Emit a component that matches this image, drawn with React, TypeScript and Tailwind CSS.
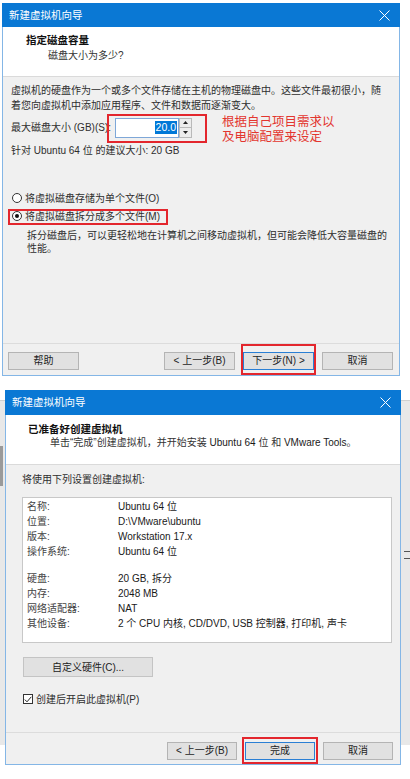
import React from "react";

const F = "[font-family:'Liberation_Sans','Noto_Sans_CJK_SC',sans-serif]";

function CloseX() {
  return (
    <svg width="11" height="11" viewBox="0 0 11 11" className="shrink-0">
      <path d="M0.5 0.5 L10.5 10.5 M10.5 0.5 L0.5 10.5" stroke="#ffffff" strokeWidth="1" fill="none" />
    </svg>
  );
}

function TitleBar({ h }: { h: string }) {
  return (
    <div className={`${h} bg-[#0a78d4] flex items-center justify-between pl-[7px] pr-[10px]`}>
      <span className="text-[10.5px] text-white [font-family:'Noto_Sans_CJK_SC',sans-serif] leading-none">新建虚拟机向导</span>
      <CloseX />
    </div>
  );
}

function Btn({ children, w, primary }: { children: React.ReactNode; w: string; primary?: boolean }) {
  return (
    <div
      className={`${w} h-[18px] flex items-center justify-center bg-[#e1e1e1] border ${
        primary ? "border-[#2a7fd4]" : "border-[#b4b4b4]"
      } text-[10px] text-[#1e1e1e] leading-none`}
    >
      {children}
    </div>
  );
}

function RedBox({ className }: { className: string }) {
  return <div className={`absolute border-2 border-[#e3262d] pointer-events-none ${className}`} />;
}

function Radio({ checked }: { checked?: boolean }) {
  return (
    <div className="w-[10px] h-[10px] rounded-full border border-[#333] bg-white flex items-center justify-center shrink-0">
      {checked && <div className="w-[4px] h-[4px] rounded-full bg-[#111]" />}
    </div>
  );
}

function Dialog1() {
  return (
    <div className="ml-[2px] mt-[3px] w-[398px]">
      <TitleBar h="h-[24px]" />
      <div className="border-x border-b border-[#84b6e6] bg-[#f0f0f0]">
        <div className="h-[50px] bg-white border-b border-[#dadada] pt-[6px]">
          <div className="pl-[23px] text-[10.5px] font-bold text-[#111] leading-[14px]">指定磁盘容量</div>
          <div className="pl-[45px] mt-[2px] text-[10px] text-[#333] leading-[14px]">磁盘大小为多少?</div>
        </div>
        <div className="relative h-[266px] pl-[8px] pt-[6px] text-[10px] text-[#2e2e2e]">
          <div className="leading-[15px] whitespace-nowrap">虚拟机的硬盘作为一个或多个文件存储在主机的物理磁盘中。这些文件最初很小，随</div>
          <div className="leading-[15px] whitespace-nowrap">着您向虚拟机中添加应用程序、文件和数据而逐渐变大。</div>
          <div className="mt-[4px] h-[21px] flex items-center">
            <div className="w-[104px] whitespace-nowrap">最大磁盘大小 (GB)(S):</div>
            <div className="w-[64px] h-[20px] bg-white border border-[#7ea7d8] flex items-center justify-end pr-[1px]">
              <span className="bg-[#0078d7] text-white px-[1px] leading-[13px] text-[10.5px]">20.0</span>
            </div>
            <div className="w-[13px] h-[20px] flex flex-col">
              <div className="h-[10px] bg-[#ececec] border border-[#b9b9b9] flex items-center justify-center">
                <svg width="5" height="3" viewBox="0 0 5 3"><path d="M0 3 L2.5 0 L5 3 Z" fill="#222" /></svg>
              </div>
              <div className="h-[10px] bg-[#ececec] border border-t-0 border-[#b9b9b9] flex items-center justify-center">
                <svg width="5" height="3" viewBox="0 0 5 3"><path d="M0 0 L2.5 3 L5 0 Z" fill="#222" /></svg>
              </div>
            </div>
          </div>
          <div className="mt-[5px] leading-[15px] whitespace-nowrap">针对 Ubuntu 64 位 的建议大小: 20 GB</div>
          <div className="mt-[31px] h-[18px] flex items-center gap-[3px] ml-[1px]">
            <Radio />
            <span className="whitespace-nowrap">将虚拟磁盘存储为单个文件(O)</span>
          </div>
          <div className="h-[18px] flex items-center gap-[3px] ml-[1px]">
            <Radio checked />
            <span className="whitespace-nowrap">将虚拟磁盘拆分成多个文件(M)</span>
          </div>
          <div className="mt-[4px] ml-[16px] leading-[13px]">
            <div className="whitespace-nowrap">拆分磁盘后，可以更轻松地在计算机之间移动虚拟机，但可能会降低大容量磁盘的</div>
            <div>性能。</div>
          </div>

          <div className={`absolute left-[219px] top-[38px] text-[12.5px] leading-[15px] text-[#e3362f] ${F}`}>
            <div>根据自己项目需求以</div>
            <div>及电脑配置来设定</div>
          </div>
          <RedBox className="left-[104px] top-[37px] w-[100px] h-[29px]" />
          <RedBox className="left-[5px] top-[132px] w-[160px] h-[16px]" />
        </div>
        <div className="relative h-[32px] border-t border-[#dcdcdc] flex items-start pt-[8px] pl-[5px] pr-[6px]">
          <Btn w="w-[71px]">帮助</Btn>
          <div className="ml-auto flex gap-[8px]">
            <Btn w="w-[71px]">&lt; 上一步(B)</Btn>
            <Btn w="w-[71px]" primary>下一步(N) &gt;</Btn>
            <Btn w="w-[71px]">取消</Btn>
          </div>
          <RedBox className="left-[238px] top-[0px] w-[75px] h-[31px]" />
        </div>
      </div>
    </div>
  );
}

const rowsA = [
  ["名称:", "Ubuntu 64 位"],
  ["位置:", "D:\\VMware\\ubuntu"],
  ["版本:", "Workstation 17.x"],
  ["操作系统:", "Ubuntu 64 位"],
];
const rowsB = [
  ["硬盘:", "20 GB, 拆分"],
  ["内存:", "2048 MB"],
  ["网络适配器:", "NAT"],
  ["其他设备:", "2 个 CPU 内核, CD/DVD, USB 控制器, 打印机, 声卡"],
];

function Row({ k, v }: { k: string; v: string }) {
  return (
    <div className="flex leading-[15px] whitespace-nowrap">
      <div className="w-[91px] text-[#444]">{k}</div>
      <div className="text-[#1a1a1a]">{v}</div>
    </div>
  );
}

function Dialog2() {
  return (
    <div className="relative mt-[14px]">
      {/* window behind */}
      <div className="absolute left-0 top-[10px] w-[410px] h-[345px] bg-[#e8e8e8] border-t border-[#d0d0d0]">
        <div className="absolute left-0 top-[45px] w-[3px] h-[40px] bg-[#9a9a9a]" />
        <div className="absolute right-0 top-[150px] w-[6px] h-[1px] bg-[#555]" />
        <div className="absolute right-0 top-[157px] w-[6px] h-[1px] bg-[#555]" />
      </div>
      <div className="relative ml-[5px] w-[396px]">
        <TitleBar h="h-[25px]" />
        <div className="border-x border-b border-[#84b6e6] bg-[#f0f0f0]">
          <div className="h-[50px] bg-white border-b border-[#dadada] pt-[7px]">
            <div className="pl-[22px] text-[10.5px] font-bold text-[#111] leading-[14px]">已准备好创建虚拟机</div>
            <div className="pl-[44px] text-[10px] text-[#333] leading-[14px] whitespace-nowrap">
              单击“完成”创建虚拟机，并开始安装 <span className="text-[#1a1a1a]">Ubuntu 64</span> 位 和 <span className="text-[#1a1a1a]">VMware Tools</span>。
            </div>
          </div>
          <div className="h-[267px] pt-[7px] text-[10px] text-[#2e2e2e]">
            <div className="pl-[16px] leading-[15px]">将使用下列设置创建虚拟机:</div>
            <div className="ml-[16px] mt-[10px] w-[370px] h-[146px] bg-white border border-[#c8c8c8] pl-[4px] pt-[1px]">
              {rowsA.map(([k, v]) => (
                <Row key={k} k={k} v={v} />
              ))}
              <div className="h-[12px]" />
              {rowsB.map(([k, v]) => (
                <Row key={k} k={k} v={v} />
              ))}
            </div>
            <div className="ml-[17px] mt-[14px] w-[130px] h-[20px] bg-[#e1e1e1] border border-[#c4c4c4] flex items-center justify-center text-[10px] text-[#222]">
              自定义硬件(C)...
            </div>
            <div className="ml-[17px] mt-[15px] h-[14px] flex items-center gap-[3px]">
              <div className="w-[10px] h-[10px] border border-[#333] bg-white flex items-center justify-center">
                <svg width="8" height="7" viewBox="0 0 8 7">
                  <path d="M0.8 3.6 L3 5.8 L7.3 0.8" stroke="#222" strokeWidth="1" fill="none" />
                </svg>
              </div>
              <span className="whitespace-nowrap">创建后开启此虚拟机(P)</span>
            </div>
          </div>
          <div className="relative h-[32px] border-t border-[#dcdcdc] flex items-start justify-end pt-[9px] pr-[7px] gap-[8px]">
            <Btn w="w-[70px]">&lt; 上一步(B)</Btn>
            <Btn w="w-[70px]" primary>完成</Btn>
            <Btn w="w-[70px]">取消</Btn>
            <RedBox className="left-[236px] top-[4px] w-[76px] h-[27px]" />
          </div>
        </div>
      </div>
    </div>
  );
}

export default function App() {
  return (
    <div className={`w-[410px] h-[779px] bg-white overflow-hidden ${F}`}>
      <Dialog1 />
      <Dialog2 />
    </div>
  );
}
